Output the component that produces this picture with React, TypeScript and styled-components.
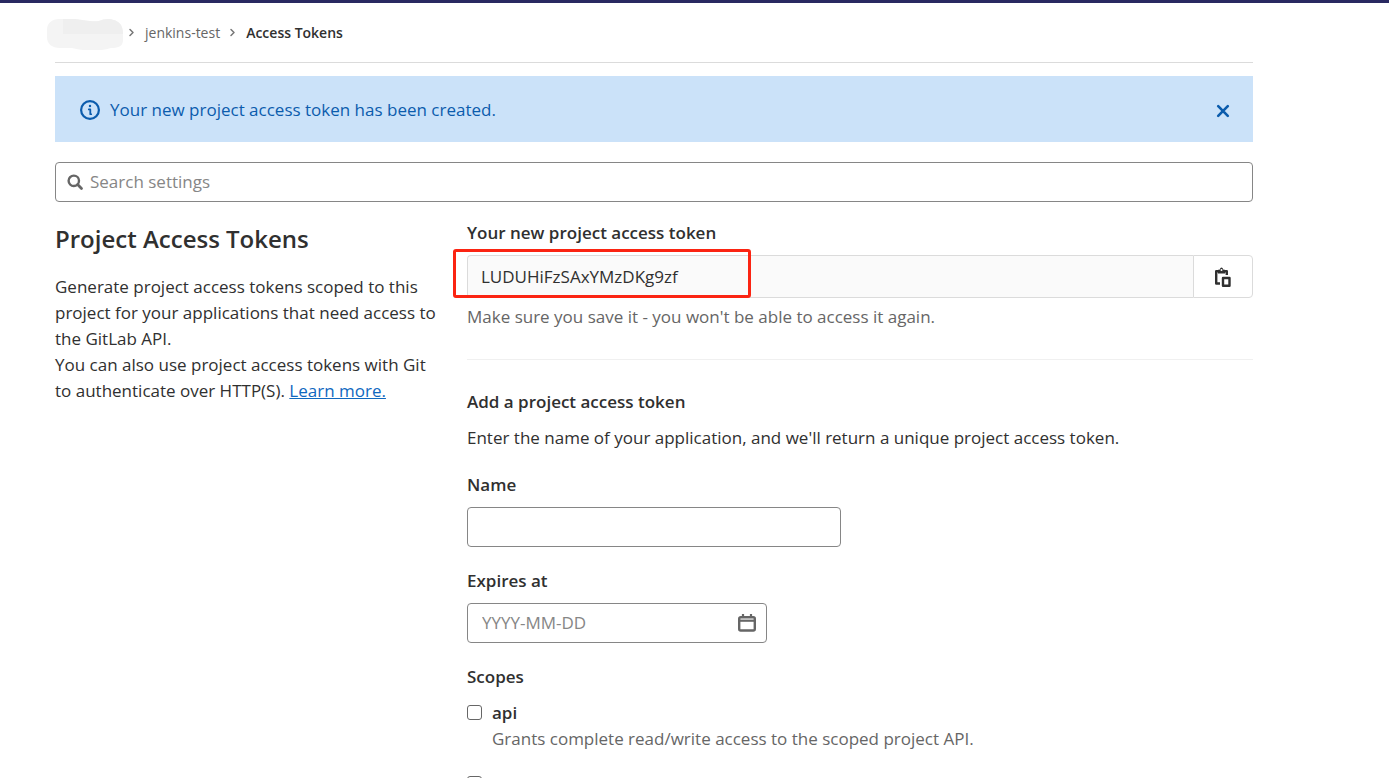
import React from "react";
import styled, { createGlobalStyle } from "styled-components";

const GlobalStyle = createGlobalStyle`
  *, *::before, *::after { box-sizing: border-box; }
  html { scrollbar-width: none; }
  body {
    margin: 0;
    background: #fff;
    color: #303030;
    font-family: "Segoe UI", "Open Sans", "Noto Sans", sans-serif;
    font-size: 17px;
    line-height: 26px;
  }
  button, input { font: inherit; color: inherit; }
`;

const TopBar = styled.div`
  height: 3px;
  background: #292961;
`;

const Page = styled.div`
  padding: 0 136px 0 55px;
`;

const Breadcrumbs = styled.nav`
  border-bottom: 1px solid #dbdbdb;
  padding: 18px 0;

  ol {
    display: flex;
    align-items: center;
    gap: 9px;
    margin: 0 0 0 -8px;
    padding: 0;
    list-style: none;
    font-size: 14px;
    line-height: 24px;
    height: 23px;
  }

  li {
    display: flex;
    align-items: center;
    gap: 9px;
  }

  li:first-child {
    gap: 5px;
  }
`;

const Crumb = styled.a<{ $current?: boolean }>`
  color: ${(p) => (p.$current ? "#303030" : "#666")};
  font-weight: ${(p) => (p.$current ? 600 : 400)};
  text-decoration: none;
`;

const Alert = styled.div`
  display: flex;
  align-items: center;
  gap: 10px;
  margin-top: 13px;
  padding: 21px 20px 19px 25px;
  background: #cbe2f9;
  color: #0b5cad;

  p {
    flex: 1;
    margin: 0;
  }
`;

const CloseButton = styled.button`
  display: flex;
  padding: 2px;
  border: 0;
  background: none;
  color: #0b5cad;
`;

const TextField = styled.div<{ $width?: string }>`
  display: flex;
  align-items: center;
  width: ${(p) => p.$width ?? "100%"};
  max-width: 100%;
  height: 40px;
  padding: 0 10px;
  gap: 6px;
  border: 1px solid #868686;
  border-radius: 4px;
  color: #666;

  input {
    flex: 1;
    min-width: 0;
    padding: 0;
    border: 0;
    outline: 0;
    background: none;
    color: #303030;
  }

  input::placeholder {
    color: #868686;
    opacity: 1;
  }
`;

const SearchField = styled(TextField)`
  margin-top: 20px;
`;

const DateField = styled(TextField)`
  padding-left: 14px;
`;

const Columns = styled.div`
  display: grid;
  grid-template-columns: minmax(0, 382fr) minmax(0, 786fr);
  column-gap: 30px;
  padding-top: 19px;
`;

const Intro = styled.section`
  h1 {
    margin: 2px 0 19px;
    font-size: 24px;
    line-height: 32px;
    font-weight: 600;
  }

  p {
    margin: 0;
  }

  a {
    color: #1068bf;
  }
`;

const Label = styled.label`
  display: block;
  margin-bottom: 10px;
  line-height: 24px;
  font-weight: 600;
`;

const TokenSection = styled.section`
  border-bottom: 1px solid #f0f0f0;
  padding-bottom: 29px;
`;

const TokenGroup = styled.div`
  position: relative;
  display: flex;
  height: 43px;

  input {
    flex: 1;
    min-width: 0;
    padding: 0 13px;
    border: 1px solid #dbdbdb;
    border-right: 0;
    border-radius: 4px 0 0 4px;
    outline: 0;
    background: #fafafa;
  }

  button {
    display: flex;
    align-items: center;
    justify-content: center;
    width: 60px;
    border: 1px solid #dbdbdb;
    border-radius: 0 4px 4px 0;
    background: #fff;
  }
`;

const Highlight = styled.span`
  position: absolute;
  left: -14px;
  top: -6px;
  width: 298px;
  height: 49px;
  border: 3px solid #fb2412;
  border-radius: 3px;
  pointer-events: none;
`;

const Hint = styled.p`
  margin: 6px 0 0;
  color: #666;
`;

const Form = styled.form`
  padding-top: 30px;

  h2 {
    margin: 0;
    font-size: 17px;
    line-height: 24px;
    font-weight: 600;
  }

  > p {
    margin: 11px 0 0;
  }
`;

const Field = styled.div`
  margin-top: 22px;
`;

const Scopes = styled.fieldset`
  margin: 22px 0 0;
  padding: 0;
  border: 0;

  legend {
    margin-bottom: 11px;
    padding: 0;
    line-height: 24px;
    font-weight: 600;
  }
`;

const ScopeRow = styled.div`
  display: grid;
  grid-template-columns: 15px 1fr;
  column-gap: 10px;
  margin-bottom: 19px;

  input {
    appearance: none;
    width: 15px;
    height: 15px;
    margin: 5px 0 0;
    border: 1px solid #666;
    border-radius: 3px;
    background: #fff;
  }

  label {
    font-weight: 600;
  }

  p {
    grid-column: 2;
    margin: 0;
    color: #666;
  }
`;

const Chevron = () => (
  <svg width="8" height="10" viewBox="0 0 8 10" fill="none" stroke="#777" strokeWidth="1.5" strokeLinecap="round" strokeLinejoin="round" aria-hidden="true">
    <path d="M2 1.5l3 3-3 3" />
  </svg>
);

const HiddenGroup = () => (
  <svg width="76" height="34" viewBox="0 0 76 34" role="img" aria-label="Group">
    <path d="M12 3H27C38 4 43 6 52 5C60 1 70 3 74 9C76 13 76 18 76 24C76 30 72 32 64 32C50 36 38 35 25 32H13C5 32 0 28 0 21V14C0 7 5 3 12 3Z" fill="#f4f4f4" />
    <path d="M16 3H27C38 4 43 6 52 5C60 1 70 3 74 9C76 13 76 15 76 18H16Z" fill="#efefef" />
  </svg>
);

const InfoIcon = () => (
  <svg width="20" height="20" viewBox="0 0 20 20" fill="none" stroke="currentColor" aria-hidden="true">
    <circle cx="10" cy="10" r="8.900" strokeWidth="2.200" />
    <circle cx="10" cy="6" r="1.200" fill="currentColor" stroke="none" />
    <path d="M8.800 9.400H10.300V14.200M10.300 14.200H11.200" strokeWidth="1.800" strokeLinecap="round" strokeLinejoin="round" />
  </svg>
);

const CloseIcon = () => (
  <svg width="16" height="16" viewBox="0 0 16 16" fill="none" stroke="currentColor" strokeWidth="2.600" strokeLinecap="round" aria-hidden="true">
    <path d="M3.200 4.200l9.600 9.600M12.800 4.200L3.200 13.800" />
  </svg>
);

const SearchIcon = () => (
  <svg width="18" height="18" viewBox="0 0 18 18" fill="none" stroke="currentColor" aria-hidden="true">
    <circle cx="7.800" cy="7.800" r="5.200" strokeWidth="2.400" />
    <path d="M11.600 11.600L15.500 15.500" strokeWidth="2.800" strokeLinecap="round" />
  </svg>
);

const PasteIcon = () => (
  <svg width="20" height="22" viewBox="0 0 20 22" fill="none" stroke="#303030" strokeWidth="2.400" strokeLinejoin="round" aria-hidden="true">
    <path d="M7 17.500H3.200V5.200H13.800V9" />
    <path d="M5 7.500V3.800H6.500L7.500 2Q8.500 1 9.500 2L10.500 3.800H12V7.500Z" fill="#303030" stroke="none" />
    <circle cx="8.500" cy="4" r="1" fill="#fff" stroke="none" />
    <path d="M10 12H16.500V19.800H10Z" />
  </svg>
);

const CalendarIcon = () => (
  <svg width="18" height="18" viewBox="0 0 18 18" fill="none" stroke="currentColor" aria-hidden="true">
    <rect x="1.200" y="3.200" width="15.600" height="13.300" rx="1.500" strokeWidth="2.400" />
    <path d="M1 6.700H17" strokeWidth="2.200" />
    <path d="M5 0V3.500M13 0V3.500" strokeWidth="2.200" />
  </svg>
);

interface ScopeProps {
  name: string;
  description: string;
}

const Scope = ({ name, description }: ScopeProps) => (
  <ScopeRow>
    <input type="checkbox" id={`scope-${name}`} />
    <label htmlFor={`scope-${name}`}>{name}</label>
    <p>{description}</p>
  </ScopeRow>
);

export default function App() {
  return (
    <>
      <GlobalStyle />
      <TopBar />
      <Page>
        <Breadcrumbs aria-label="Breadcrumbs">
          <ol>
            <li>
              <HiddenGroup />
              <Chevron />
            </li>
            <li>
              <Crumb href="#project">jenkins-test</Crumb>
              <Chevron />
            </li>
            <li>
              <Crumb href="#tokens" $current>Access Tokens</Crumb>
            </li>
          </ol>
        </Breadcrumbs>

        <Alert role="status">
          <InfoIcon />
          <p>Your new project access token has been created.</p>
          <CloseButton type="button" aria-label="Dismiss">
            <CloseIcon />
          </CloseButton>
        </Alert>

        <SearchField>
          <SearchIcon />
          <input type="text" placeholder="Search settings" aria-label="Search settings" />
        </SearchField>

        <Columns>
          <Intro>
            <h1>Project Access Tokens</h1>
            <p>
              Generate project access tokens scoped to this project for your applications that need access to the GitLab API.
            </p>
            <p>
              You can also use project access tokens with Git to authenticate over HTTP(S). <a href="#help">Learn more.</a>
            </p>
          </Intro>

          <div>
            <TokenSection>
              <Label htmlFor="created-token">Your new project access token</Label>
              <TokenGroup>
                <input id="created-token" type="text" readOnly value="LUDUHiFzSAxYMzDKg9zf" />
                <button type="button" aria-label="Copy project access token">
                  <PasteIcon />
                </button>
                <Highlight />
              </TokenGroup>
              <Hint>Make sure you save it - you won't be able to access it again.</Hint>
            </TokenSection>

            <Form>
              <h2>Add a project access token</h2>
              <p>Enter the name of your application, and we'll return a unique project access token.</p>
              <Field>
                <Label htmlFor="token-name">Name</Label>
                <TextField $width="374px">
                  <input id="token-name" type="text" />
                </TextField>
              </Field>
              <Field>
                <Label htmlFor="token-expiry">Expires at</Label>
                <DateField $width="300px">
                  <input id="token-expiry" type="text" placeholder="YYYY-MM-DD" />
                  <CalendarIcon />
                </DateField>
              </Field>
              <Scopes>
                <legend>Scopes</legend>
                <Scope name="api" description="Grants complete read/write access to the scoped project API." />
                <Scope name="read_api" description="Grants read access to the scoped project API." />
              </Scopes>
            </Form>
          </div>
        </Columns>
      </Page>
    </>
  );
}
